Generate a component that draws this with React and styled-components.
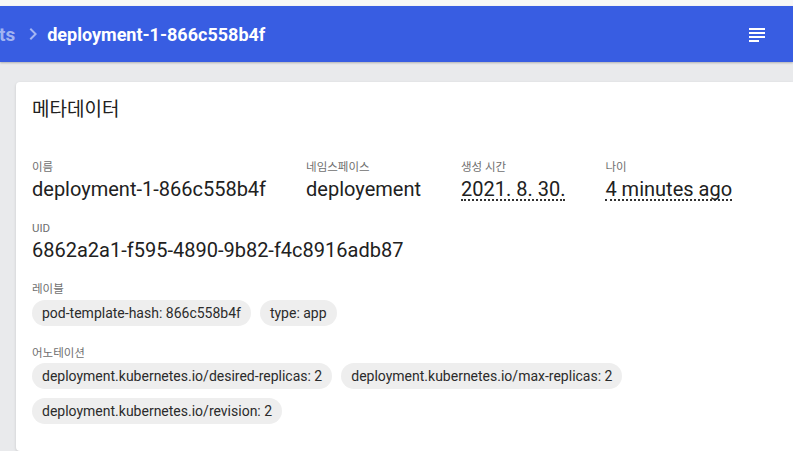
import React from "react";
import styled, { createGlobalStyle } from "styled-components";

const Global = createGlobalStyle`
  html, body { margin: 0; padding: 0; }
  body {
    background: #e9eaec;
    font-family: Roboto, "Noto Sans CJK KR", "Noto Sans", sans-serif;
    overflow: hidden;
    width: 793px;
    height: 451px;
  }
`;

const Page = styled.div`
  display: flex;
  flex-direction: column;
  height: 451px;
`;

const TopStrip = styled.div`
  height: 6px;
  background: #f7f7f7;
`;

const Toolbar = styled.header`
  height: 56px;
  background: #385de2;
  display: flex;
  align-items: center;
  justify-content: space-between;
  padding: 0 24px 0 0;
  box-shadow: 0 1px 2px rgba(0, 0, 0, 0.25);
  position: relative;
  z-index: 1;
`;

const Crumbs = styled.div`
  display: flex;
  align-items: center;
  color: #fff;
  font-size: 18px;
  font-weight: 700;
`;

const PrevCrumb = styled.span`
  color: rgba(255, 255, 255, 0.55);
  margin-left: -1px;
  font-size: 19px;
`;

const Chevron = styled.svg`
  width: 24px;
  height: 24px;
  margin: 0 2px 0 6px;
  fill: rgba(255, 255, 255, 0.55);
`;

const Title = styled.span``;

const IconBtn = styled.svg`
  width: 24px;
  height: 24px;
  fill: #fff;
  margin-top: 2px;
`;

const Main = styled.main`
  flex: 1;
  padding: 20px 0 0 16px;
  display: flex;
`;

const Card = styled.section`
  flex: 1;
  background: #fff;
  border-radius: 4px 0 0 4px;
  box-shadow: 0 1px 3px rgba(0, 0, 0, 0.15);
  padding: 16px 16px 0 16px;
`;

const CardTitle = styled.h2`
  margin: 0;
  font-weight: 400;
  font-size: 19px;
  line-height: 24px;
  color: #212121;
`;

const Body = styled.div`
  margin-top: 37px;
  display: flex;
  flex-direction: column;
  gap: 19px;
`;

const Row = styled.div`
  display: flex;
  gap: 40px;
`;

const Field = styled.div`
  display: flex;
  flex-direction: column;
`;

const Label = styled.div`
  font-size: 11.5px;
  line-height: 16px;
  color: #6f6f6f;
  margin-bottom: ${(p) => (p.$tight ? 3 : 2)}px;
`;

const Value = styled.div`
  font-size: 20px;
  line-height: 24px;
  color: #212121;
  white-space: nowrap;
`;

const Dotted = styled.span`
  border-bottom: 2px dotted #333;
  line-height: 20px;
  display: inline-block;
`;

const Chips = styled.div`
  display: flex;
  flex-wrap: wrap;
  gap: 9px 9px;
`;

const Chip = styled.span`
  height: 26px;
  line-height: 26px;
  padding: 0 10px;
  border-radius: 13px;
  background: #eeeeee;
  color: #2b2b2b;
  font-size: 14px;
  white-space: nowrap;
`;

export default function App() {
  return (
    <>
      <Global />
      <Page>
        <TopStrip />
        <Toolbar>
          <Crumbs>
            <PrevCrumb>ts</PrevCrumb>
            <Chevron viewBox="0 0 24 24">
              <path d="M10 6 8.59 7.41 13.17 12l-4.58 4.59L10 18l6-6z" />
            </Chevron>
            <Title>deployment-1-866c558b4f</Title>
          </Crumbs>
          <IconBtn viewBox="0 0 24 24">
            <path d="M14 17H4v2h10v-2zm6-8H4v2h16V9zM4 15h16v-2H4v2zM4 5v2h16V5H4z" />
          </IconBtn>
        </Toolbar>
        <Main>
          <Card>
            <CardTitle>메타데이터</CardTitle>
            <Body>
              <Row>
                <Field>
                  <Label>이름</Label>
                  <Value>deployment-1-866c558b4f</Value>
                </Field>
                <Field>
                  <Label>네임스페이스</Label>
                  <Value>deployement</Value>
                </Field>
                <Field>
                  <Label>생성 시간</Label>
                  <Value>
                    <Dotted>2021. 8. 30.</Dotted>
                  </Value>
                </Field>
                <Field>
                  <Label>나이</Label>
                  <Value>
                    <Dotted>4 minutes ago</Dotted>
                  </Value>
                </Field>
              </Row>
              <Field>
                <Label>UID</Label>
                <Value>6862a2a1-f595-4890-9b82-f4c8916adb87</Value>
              </Field>
              <Field>
                <Label $tight>레이블</Label>
                <Chips>
                  <Chip>pod-template-hash: 866c558b4f</Chip>
                  <Chip>type: app</Chip>
                </Chips>
              </Field>
              <Field>
                <Label>어노테이션</Label>
                <Chips>
                  <Chip>deployment.kubernetes.io/desired-replicas: 2</Chip>
                  <Chip>deployment.kubernetes.io/max-replicas: 2</Chip>
                  <Chip>deployment.kubernetes.io/revision: 2</Chip>
                </Chips>
              </Field>
            </Body>
          </Card>
        </Main>
      </Page>
    </>
  );
}
